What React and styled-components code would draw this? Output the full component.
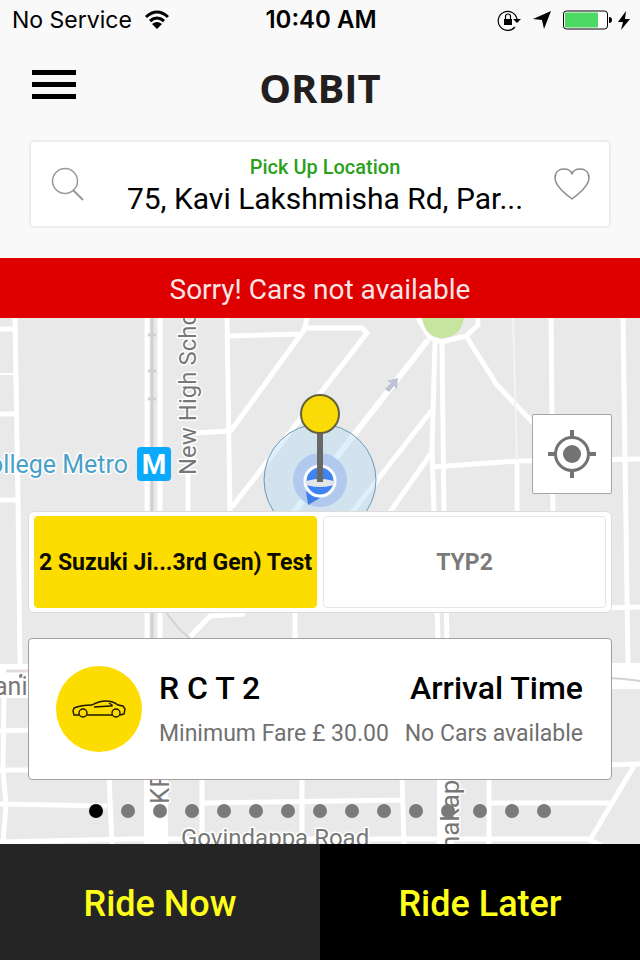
import React, { useState } from "react";
import styled, { createGlobalStyle } from "styled-components";

const Global = createGlobalStyle`
  *, *::before, *::after { box-sizing: border-box; }
  body { margin: 0; background: #f9f9f9; font-family: Roboto, "Liberation Sans", sans-serif; color: #000; }
  button, input { font: inherit; color: inherit; }
  button { cursor: pointer; }
`;

const Screen = styled.div`
  display: flex;
  flex-direction: column;
  min-height: 100vh;
`;

const StatusBar = styled.div`
  display: grid;
  grid-template-columns: 1fr auto 1fr;
  align-items: center;
  height: 40px;
  padding: 0 10px 0 12px;
  font: 400 23px/28px Inter, sans-serif;
`;

const StatusGroup = styled.div`
  display: flex;
  align-items: center;
  gap: ${(p) => p.$gap}px;
  justify-content: ${(p) => (p.$end ? "flex-end" : "flex-start")};
`;

const Clock = styled.time`
  font-size: 24px;
  font-weight: 600;
`;

const NavBar = styled.header`
  display: grid;
  grid-template-columns: 1fr auto 1fr;
  align-items: center;
  height: 100px;
  padding: 0 30px;
`;

const MenuButton = styled.button`
  justify-self: start;
  display: flex;
  flex-direction: column;
  gap: 7px;
  width: 48px;
  padding: 0 2px;
  margin-bottom: 12px;
  border: 0;
  background: none;
`;

const MenuLine = styled.span`
  height: 5px;
  background: #000;
`;

const Brand = styled.h1`
  margin: 0 0 4px;
  font: 700 40px/48px "Open Sans", sans-serif;
  color: #231f20;
`;

const PickupCard = styled.section`
  display: grid;
  grid-template-columns: 74px 1fr 74px;
  align-items: center;
  height: 88px;
  margin: 0 29px 30px;
  border: 2px solid #ededed;
  border-radius: 5px;
  background: #fff;
`;

const IconButton = styled.button`
  display: flex;
  justify-content: center;
  padding: 0;
  border: 0;
  background: none;
`;

const PickupField = styled.div`
  display: flex;
  flex-direction: column;
  min-width: 0;
  padding: 5px 0 0 10px;
  text-align: center;
`;

const PickupLabel = styled.label`
  font: 500 20px/24px Roboto, sans-serif;
  color: #2ba01c;
`;

const PickupInput = styled.input`
  width: 100%;
  height: 40px;
  padding: 0;
  border: 0;
  background: none;
  font-size: 30px;
  text-align: center;
  text-overflow: ellipsis;
`;

const Alert = styled.div`
  display: flex;
  align-items: center;
  justify-content: center;
  height: 60px;
  padding-top: 3px;
  background: #de0000;
  color: #fbe5e5;
  font-size: 28px;
  line-height: 32px;
`;

const MapArea = styled.main`
  position: relative;
  flex: 1;
  display: flex;
  flex-direction: column;
  padding: 96px 28px 26px;
  overflow: hidden;
  background: #e9e9e9;
`;

const MapDrawing = styled.svg`
  position: absolute;
  inset: 0;
  width: 100%;
  height: 100%;
`;

const LocateButton = styled.button`
  position: relative;
  align-self: flex-end;
  display: flex;
  align-items: center;
  justify-content: center;
  width: 80px;
  height: 80px;
  padding: 0;
  margin-bottom: 17px;
  border: 1px solid #a6a6a6;
  border-radius: 2px;
  background: #fff;
`;

const TypeSwitch = styled.div`
  position: relative;
  display: grid;
  grid-template-columns: repeat(2, minmax(0, 1fr));
  gap: 6px;
  height: 102px;
  padding: 4px 5px;
  margin-bottom: 25px;
  border: 1px solid #dcdcdc;
  border-radius: 6px;
  background: #fff;
`;

const TypeButton = styled.button`
  padding: 2px 0 0;
  border: 1px solid ${(p) => (p.$active ? "#fddc00" : "#e6e6e6")};
  border-radius: 4px;
  background: ${(p) => (p.$active ? "#fddc00" : "#fff")};
  color: ${(p) => (p.$active ? "#0c0b00" : "#7b7b7b")};
  font-size: 23px;
  font-weight: 700;
  line-height: 28px;
  white-space: nowrap;
`;

const FareCard = styled.section`
  position: relative;
  display: flex;
  align-items: center;
  gap: 17px;
  height: 142px;
  padding: 0 28px 0 27px;
  border: 1px solid #a0a0a0;
  border-radius: 4px;
  background: #fff;
`;

const CarBadge = styled.div`
  flex: none;
  display: flex;
  align-items: center;
  justify-content: center;
  width: 86px;
  height: 86px;
  border-radius: 50%;
  background: #fddc00;
`;

const FareInfo = styled.div`
  flex: 1;
  display: flex;
  flex-direction: column;
  gap: 12px;
  padding-top: 2px;
`;

const FareRow = styled.div`
  display: flex;
  justify-content: space-between;
  white-space: nowrap;
`;

const FareTitle = styled.h2`
  margin: 0;
  font-size: 32px;
  font-weight: 500;
  line-height: 36px;
`;

const FareNote = styled.span`
  font-size: 23px;
  line-height: 32px;
  color: #707070;
`;

const Pager = styled.nav`
  position: relative;
  display: flex;
  justify-content: center;
  gap: 18px;
  margin-top: 24px;
`;

const PagerDot = styled.button`
  width: 14px;
  height: 14px;
  padding: 0;
  border: 0;
  border-radius: 50%;
  background: ${(p) => (p.$active ? "#000" : "#7a7a7a")};
`;

const Footer = styled.footer`
  display: grid;
  grid-template-columns: 1fr 1fr;
  height: 116px;
`;

const RideButton = styled.button`
  padding: 4px 0 0;
  border: 0;
  background: ${(p) => (p.$dark ? "#000" : "#252525")};
  color: #ffff1a;
  font-size: 36px;
  font-weight: 500;
  line-height: 44px;
`;

const roads = [
  ["M15 318 L18 500 L20 665 M0 329 H17 M0 414 H16 M0 500 H18", 5],
  ["M0 374 H15", 2],
  ["M147 318 V640 M160 318 V640", 5],
  ["M227 318 L230 515 M229 336 L301 334 M307 318 L304 330 L230 432 M304 328 H362 L367 333 L232 507 M195 433 L229 431 M188 470 V515", 5],
  ["M428 340 L293 513", 6],
  ["M432 410 L350 515 M432 452 L388 515", 5],
  ["M435 342 L432 448 L438 640 M442 342 L444 512 L447 640", 5],
  ["M418 318 L430 338 L442 342 L466 336 L478 325 V316", 5],
  ["M466 336 L497 385 L540 430", 5],
  ["M433 467 L517 461 L640 459 M517 460 V512", 5],
  ["M551 318 L553 512 M623 318 L628 664 M600 608 L640 607", 5],
  ["M189 638 L210 616 L245 614 M295 610 V640", 5],
  ["M4 698 L3 770 L6 805 L3 844 M0 731 L30 730 M0 770 H30 M0 804 L107 806 M109 775 L112 844 M202 775 V844", 5],
  ["M202 803 L402 800 M302 775 V844 M402 775 L404 844 M489 775 V844 M489 803 H610", 5],
  ["M600 765 L640 764 M634 766 L590 840 L606 848 M0 842 L130 839 H437 L590 839", 5],
];

function MapView() {
  return (
    <MapDrawing viewBox="0 318 640 526" preserveAspectRatio="xMidYMin slice" role="img" aria-label="Map">
      <rect y="318" width="640" height="526" fill="#e9e9e9" />
      <g fill="none" stroke="#fff" strokeLinejoin="round">
        {roads.map(([d, w]) => (
          <path key={d} d={d} strokeWidth={w} />
        ))}
        <path d="M513 318 L517 460" stroke="#f4f4f4" strokeWidth="2" />
      </g>
      <g fill="#fff">
        <rect y="664" width="40" height="34" />
        <rect x="600" y="663" width="40" height="26" />
        <rect x="144" y="770" width="24" height="74" />
        <rect x="437" y="770" width="17" height="74" />
      </g>
      <path d="M6 671 H30" stroke="#e4dcd8" strokeWidth="3" />
      <circle cx="21" cy="676" r="2" fill="#777" />
      <path d="M605 678 Q620 678 640 681 M166 612 Q178 630 190 638" fill="none" stroke="#d2d2d2" strokeWidth="2" />
      <path d="M152 318 V640 M148 335 H156 M148 371 H156 M148 399 H156" stroke="#d0d0d0" strokeWidth="3" />
      <path d="M422 318 Q425 337 442 338 Q461 337 464 318 Z" fill="#c8e59f" />
      <path d="M385 389 L391 383 L387 381 L398 378 L397 389 L394 386 L389 392 Z" fill="#bfc2d5" />
      <g fontFamily="Roboto, sans-serif" fill="#777" stroke="#fff" strokeWidth="3" paintOrder="stroke" strokeLinejoin="round">
        <text x="128" y="473" fontSize="25" textAnchor="end" fill="#4a9fc9">ollege Metro</text>
        <text transform="translate(196 475) rotate(-90)" fontSize="24">New High School</text>
        <text x="-6" y="695" fontSize="25">aniv</text>
        <text transform="translate(169 804) rotate(-90)" fontSize="26">KR</text>
        <text x="181" y="846" fontSize="24">Govindappa Road</text>
        <text transform="translate(459 850) rotate(-90)" fontSize="26">nakap</text>
      </g>
      <rect x="137" y="447" width="34" height="34" rx="4" fill="#0aa9fc" />
      <text x="154" y="474" fontSize="28" fontWeight="700" textAnchor="middle" fill="#fff" fontFamily="Roboto, sans-serif">M</text>
      <circle cx="320" cy="480" r="56" fill="#b5dcf5" fillOpacity=".42" stroke="#6f99b8" />
      <circle cx="320" cy="480" r="27" fill="#b1c9ec" />
      <path d="M306 491 L308 505 L320 498 Z" fill="#3f7fea" />
      <circle cx="320" cy="481" r="15" fill="#3f83f1" stroke="#fff" strokeWidth="3" />
      <ellipse cx="320" cy="483" rx="15" ry="4" fill="#e2e5ea" />
      <path d="M320 430 V482" stroke="#686868" strokeWidth="6" />
      <circle cx="320" cy="414" r="19" fill="#fadb07" stroke="#66603a" strokeWidth="2" />
    </MapDrawing>
  );
}

const Wifi = () => (
  <svg width="26" height="20" viewBox="0 0 26 20" fill="none" stroke="#000" strokeWidth="3" aria-hidden="true">
    <path d="M2 7 Q13 -3 24 7 M6 11 Q13 5 20 11" />
    <path d="M8 14 Q13 10 18 14 L13 19 Z" fill="#000" stroke="none" />
  </svg>
);

const RotationLock = () => (
  <svg width="24" height="22" viewBox="0 0 24 22" fill="none" stroke="#000" aria-hidden="true">
    <path d="M18 18 A9.500 9.500 0 1 1 20 10" strokeWidth="1.200" />
    <path d="M16 10 H24 L20 14 Z M7 10 H15 V16 H7 Z" fill="#000" stroke="none" />
    <path d="M8.500 10 V7.500 A2.500 2.500 0 0 1 13.500 7.500 V10" strokeWidth="1.200" />
  </svg>
);

const LocationArrow = () => (
  <svg width="18" height="18" viewBox="0 0 18 18" aria-hidden="true">
    <path d="M18 0 L11 18 L9 9 L0 8 Z" />
  </svg>
);

const Battery = () => (
  <svg width="49" height="20" viewBox="0 0 49 20" aria-hidden="true">
    <rect x="0.500" y="1" width="44" height="18" rx="3" fill="#fff" stroke="#000" />
    <rect x="2" y="2.500" width="33" height="15" rx="1" fill="#4cd964" />
    <path d="M46 7 Q49 7 49 10 Q49 13 46 13 Z" />
  </svg>
);

const Bolt = () => (
  <svg width="12" height="19" viewBox="0 0 12 19" aria-hidden="true">
    <path d="M8 0 L0 11 H5 L3 19 L12 8 H7 Z" />
  </svg>
);

const SearchIcon = () => (
  <svg width="34" height="36" viewBox="0 0 34 36" fill="none" stroke="#999" aria-hidden="true">
    <circle cx="14" cy="15" r="12.500" strokeWidth="1.500" />
    <path d="M22 24 L32 34" strokeWidth="2" />
  </svg>
);

const HeartIcon = () => (
  <svg width="36" height="34" viewBox="0 0 36 34" fill="none" stroke="#8c8c8c" strokeWidth="1.500" strokeLinejoin="round" aria-hidden="true">
    <path d="M18 32 C14 29 1 19 1 11 C1 5 5 2 10 2 C14 2 17 4 18 7 C19 4 22 2 26 2 C31 2 35 5 35 11 C35 19 22 29 18 32 Z" />
  </svg>
);

const CrosshairIcon = () => (
  <svg width="48" height="48" viewBox="0 0 48 48" fill="none" stroke="#737373" aria-hidden="true">
    <circle cx="24" cy="24" r="16.500" strokeWidth="3" />
    <circle cx="24" cy="24" r="9" fill="#737373" stroke="none" />
    <path d="M24 0 V8 M24 40 V48 M0 24 H8 M40 24 H48" strokeWidth="4" />
  </svg>
);

const CarIcon = () => (
  <svg width="54" height="20" viewBox="0 0 54 20" fill="none" stroke="#1c1900" strokeWidth="1.400" strokeLinejoin="round" aria-hidden="true">
    <path d="M7 16 L2 16 L1 12 L2 9 Q9 6 20 6 Q27 2 34 2 Q41 2 46 6 L51 7 L53 10 L52 15 L48 16 M40 16 H15" />
    <path d="M22 8 L38 7 Q41 7 40 6 L37 4" />
    <circle cx="11" cy="14" r="4" />
    <circle cx="44" cy="14" r="4" />
  </svg>
);

const types = ["2 Suzuki Ji...3rd Gen) Test", "TYP2"];
const pages = Array.from({ length: 15 }, (_, i) => i);

export default function App() {
  const [type, setType] = useState(0);
  const [page, setPage] = useState(0);

  return (
    <Screen>
      <Global />
      <StatusBar>
        <StatusGroup $gap={12}>
          <span>No Service</span>
          <Wifi />
        </StatusGroup>
        <Clock>10:40 AM</Clock>
        <StatusGroup $gap={12} $end>
          <RotationLock />
          <LocationArrow />
          <StatusGroup $gap={6}>
            <Battery />
            <Bolt />
          </StatusGroup>
        </StatusGroup>
      </StatusBar>
      <NavBar>
        <MenuButton aria-label="Menu">
          <MenuLine />
          <MenuLine />
          <MenuLine />
        </MenuButton>
        <Brand>ORBIT</Brand>
      </NavBar>
      <PickupCard>
        <IconButton aria-label="Search"><SearchIcon /></IconButton>
        <PickupField>
          <PickupLabel htmlFor="pickup">Pick Up Location</PickupLabel>
          <PickupInput id="pickup" type="text" defaultValue="75, Kavi Lakshmisha Rd, Par..." />
        </PickupField>
        <IconButton aria-label="Save as favourite"><HeartIcon /></IconButton>
      </PickupCard>
      <Alert role="alert">Sorry! Cars not available</Alert>
      <MapArea>
        <MapView />
        <LocateButton aria-label="My location"><CrosshairIcon /></LocateButton>
        <TypeSwitch>
          {types.map((name, i) => (
            <TypeButton key={name} $active={type === i} aria-pressed={type === i} onClick={() => setType(i)}>
              {name}
            </TypeButton>
          ))}
        </TypeSwitch>
        <FareCard>
          <CarBadge><CarIcon /></CarBadge>
          <FareInfo>
            <FareRow>
              <FareTitle>R C T 2</FareTitle>
              <FareTitle>Arrival Time</FareTitle>
            </FareRow>
            <FareRow>
              <FareNote>Minimum Fare £ 30.00</FareNote>
              <FareNote>No Cars available</FareNote>
            </FareRow>
          </FareInfo>
        </FareCard>
        <Pager aria-label="Vehicles">
          {pages.map((i) => (
            <PagerDot key={i} $active={page === i} aria-label={`Page ${i + 1}`} onClick={() => setPage(i)} />
          ))}
        </Pager>
      </MapArea>
      <Footer>
        <RideButton>Ride Now</RideButton>
        <RideButton $dark>Ride Later</RideButton>
      </Footer>
    </Screen>
  );
}
